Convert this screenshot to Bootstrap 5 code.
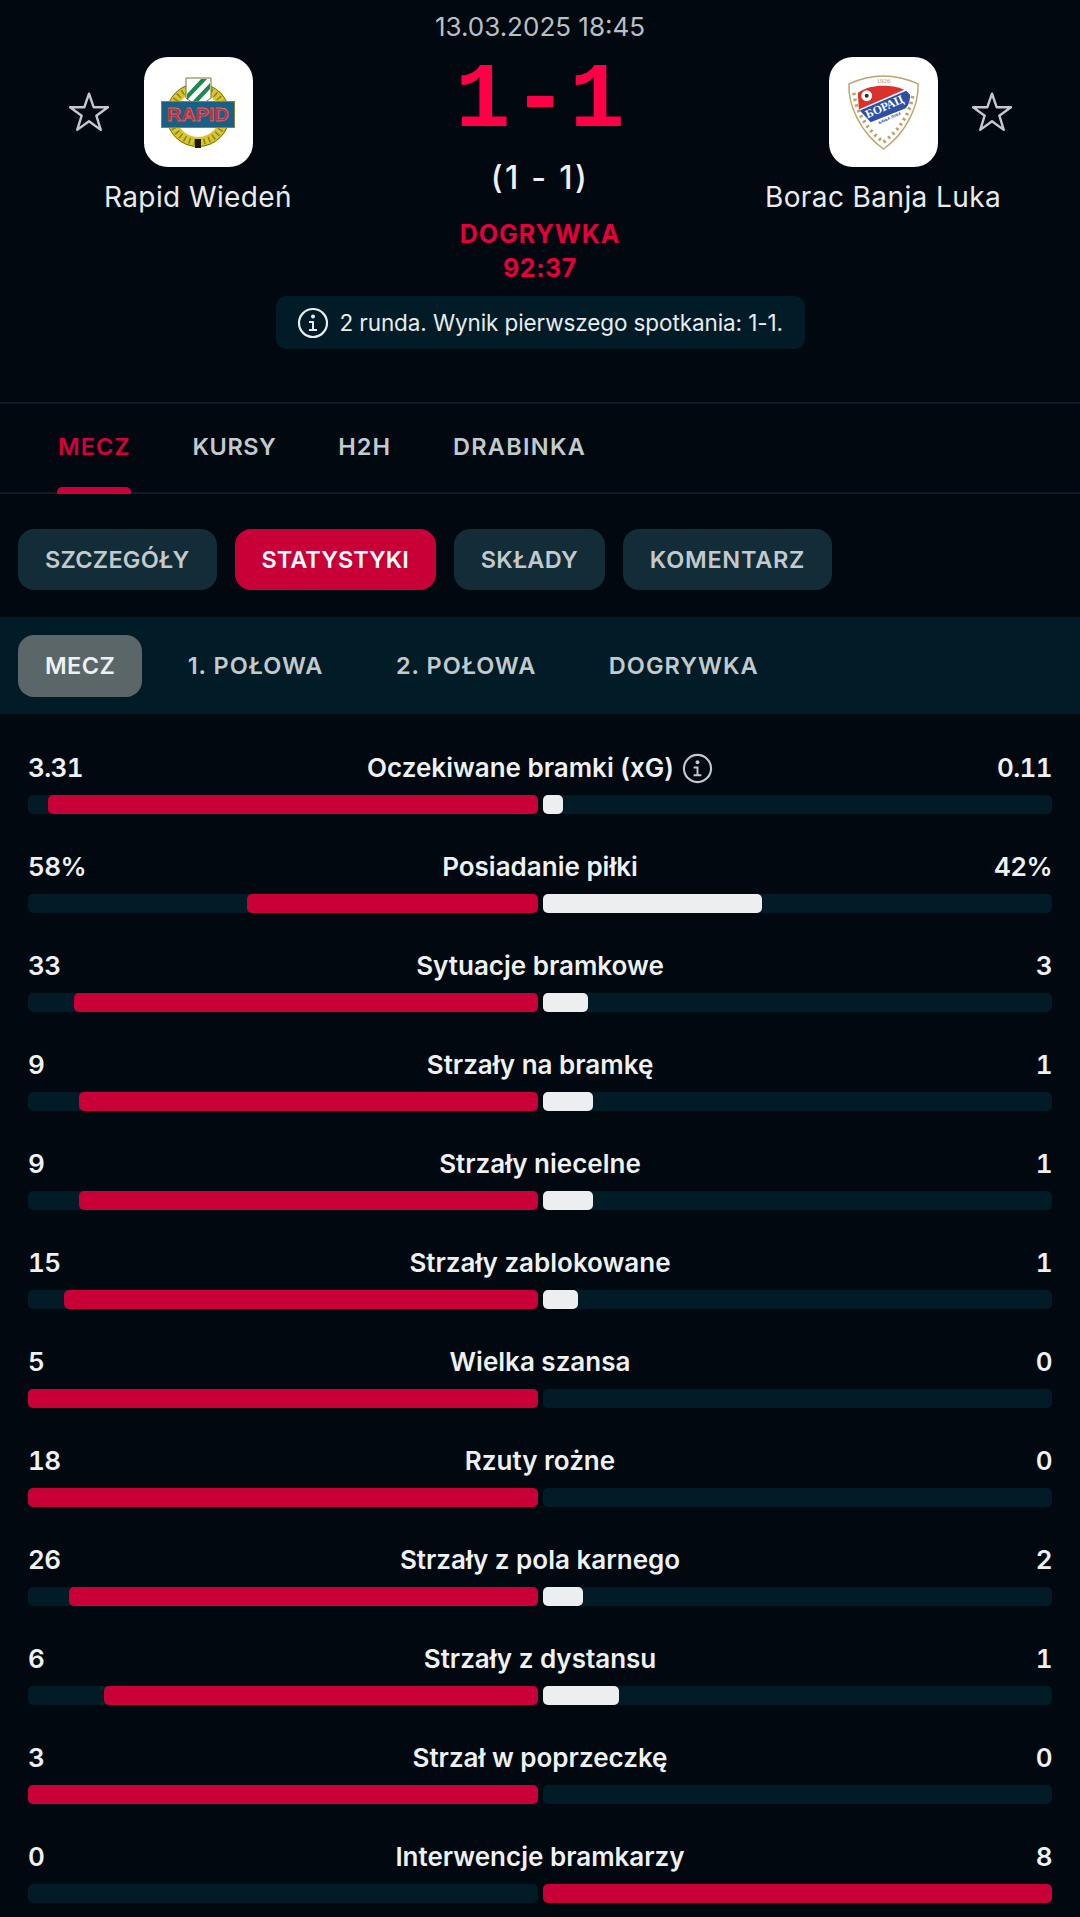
<!DOCTYPE html>
<html lang="pl">
<head>
<meta charset="UTF-8">
<title>Rapid Wiedeń - Borac Banja Luka</title>
<link href="https://cdn.jsdelivr.net/npm/bootstrap@5.3.0/dist/css/bootstrap.min.css" rel="stylesheet">
<style>
html, body { height: 100%; }
body { background: #01080f; color: #e8ecee; font-family: Inter, "Noto Sans", sans-serif; height: 1917px; overflow: hidden; }
.mecz-head { height: 404px; border-bottom: 2px solid #0d1c25; position: relative; }
.data-meczu { text-align: center; color: #b9c0c3; font-size: 26px; line-height: 28px; padding-top: 13px; }
.herb { width: 109px; height: 110px; border-radius: 24px; background: #fff; }
.nazwa { font-size: 28px; line-height: 34px; letter-spacing: .4px; color: #e8ecee; white-space: nowrap; margin-top: 13px; }
.kol-team { position: absolute; top: 57px; width: 300px; }
.gwiazda { position: absolute; top: 91px; }
.wynik { font-family: "Liberation Mono", monospace; font-weight: 700; font-size: 92px; line-height: 84px; color: #ff0046; letter-spacing: 2px; margin-top: 19px; padding-left: 2px; }
.wynik-pol { font-size: 32px; font-weight: 500; line-height: 36px; color: #eef1f2; letter-spacing: 2.3px; margin-top: 16px; }
.status { color: #e4003a; font-size: 25px; font-weight: 700; line-height: 34px; letter-spacing: 1px; }
.status.pierwszy { margin-top: 21px; }
.status.czas { letter-spacing: .6px; }
.info-box { background: #021c27; border-radius: 10px; height: 53px; padding: 0 21px; font-size: 22.5px; letter-spacing: -.1px; color: #e8ecee; width: 529px; margin-top: 11px; white-space: nowrap; }
.info-box svg { margin-right: 11px; }
.zakladki { height: 90px; border-bottom: 2px solid #0d1c25; padding-left: 58px; gap: 62px; }
.zakladka { font-size: 23.5px; font-weight: 600; letter-spacing: 1px; color: #c3cacd; position: relative; line-height: 86px; }
.zakladka.wybrana { color: #d6003c; }
.zakladka.wybrana::after { content: ""; position: absolute; left: -1px; right: 0; bottom: -2px; height: 7px; background: #c80037; border-radius: 5px 5px 0 0; }
.zakladka.kursy { letter-spacing: .5px; }
.zakladka.drabinka { letter-spacing: 1.3px; }
.pigulki { padding: 35px 18px 27px; gap: 18px; }
.pigulka { height: 61px; border-radius: 16px; background: #122c38; color: #c3cacd; font-size: 23.5px; font-weight: 600; letter-spacing: .23px; padding: 0 27px; }
.pigulka.wybrana { background: #c80037; color: #fff; letter-spacing: 0; }
.pigulka.sklady { letter-spacing: .2px; }
.pigulka.komentarz { letter-spacing: .73px; }
.okresy { background: #021c27; height: 97px; padding: 0 18px; }
.okres { font-size: 23.5px; font-weight: 600; letter-spacing: 1px; color: #c3cacd; height: 62px; padding: 0 27px; border-radius: 16px; margin-right: 18.5px; }
.okres.wybrany { background: #5b6669; color: #eef1f2; letter-spacing: .4px; }
.statystyki { padding: 0 28px; margin-top: 36px; }
.wiersz { height: 99px; }
.wiersz-top { display: grid; grid-template-columns: 1fr auto 1fr; align-items: center; font-size: 26px; font-weight: 600; line-height: 36px; color: #eef1f2; height: 36px; }
.liczba { font-variant-numeric: tabular-nums; letter-spacing: -.6px; }
.paski { gap: 5px; margin-top: 9px; }
.tor { flex: 1 1 0; height: 19px; background: #021c27; border-radius: 5px; display: flex; }
.tor.lewy { justify-content: flex-end; }
.wypelnienie { height: 100%; border-radius: 5px; }
.lewy .wypelnienie { background: #c80037; }
.prawy .wypelnienie { background: #eceef0; }
.prawy .wypelnienie.czerwony { background: #c80037; }
</style>
</head>
<body>

<div class="mecz-head">
    <div class="data-meczu">13.03.2025 18:45</div>

    <div class="kol-team d-flex flex-column align-items-center" style="left: 48px">
        <div class="herb d-flex align-items-center justify-content-center">
            <svg width="74" height="71" viewBox="0 0 74 71">
                <circle cx="37" cy="38" r="27" fill="none" stroke="#d9c62e" stroke-width="10"/>
                <circle cx="37" cy="38" r="31.500" fill="none" stroke="#77721a" stroke-width="1"/>
                <circle cx="37" cy="38" r="27" fill="none" stroke="#8a8420" stroke-width="6" stroke-dasharray="1.500 3.500"/>
                <path d="M25 1h25v20l-12.500 9L25 21z" fill="#fff" stroke="#6d7a3a"/>
                <path d="M26 17 40 2h6L26 23zM30 26 49 6v6L34 28z" fill="#1c8a4e"/>
                <rect x=".5" y="24.500" width="73" height="26" fill="#1b5f85" stroke="#85853a"/>
                <text x="37" y="44" text-anchor="middle" font-family="Liberation Sans, sans-serif" font-weight="700" font-size="18.500" textLength="62" lengthAdjust="spacingAndGlyphs" fill="#d8242a" stroke="#e9a9a0" stroke-width=".3">RAPID</text>
                <rect x="34" y="62" width="6" height="9" fill="#1a1a14"/>
            </svg>
        </div>
        <div class="nazwa">Rapid Wiedeń</div>
    </div>
    <svg class="gwiazda" style="left: 68px" width="42" height="42" viewBox="0 0 40 40"><path d="M20 2.500 24.500 15.500H38L27 23.500 31.200 37 20 28.800 8.800 37 13 23.500 2 15.500H15.500z" fill="none" stroke="#c3cacd" stroke-width="2.300" stroke-linejoin="round"/></svg>

    <div class="kol-team d-flex flex-column align-items-center" style="left: 733px">
        <div class="herb d-flex align-items-center justify-content-center">
            <svg width="73" height="75" viewBox="0 0 72 76">
                <path d="M36 1C48 1 60 4 71 9 72 30 60 58 36 75 12 58 0 30 1 9 12 4 24 1 36 1z" fill="#fff" stroke="#bfa36a" stroke-width="1.500"/>
                <path d="M10 18C18 13 26 11 35 11S50 12 57 15L11 35z" fill="#d8322b"/>
                <path d="M12 36 59 16l4 4c0 8-3 12-5 14L23 48z" fill="#2c50a5"/>
                <circle cx="19" cy="21" r="5.500" fill="#fff"/><circle cx="19" cy="21" r="2" fill="#2a2a30"/>
                <text x="36" y="8.500" text-anchor="middle" font-family="Liberation Serif, serif" font-size="7" fill="#b5975a">1926</text>
                <text x="37" y="36" text-anchor="middle" transform="rotate(-24 37 32)" font-family="Liberation Serif, serif" font-weight="700" font-size="12" fill="#fff">БОРАЦ</text>
                <text x="42" y="45" text-anchor="middle" transform="rotate(-24 42 43)" font-family="Liberation Sans, sans-serif" font-weight="700" font-size="4" fill="#2c50a5">БАЊА ЛУКА</text>
                <path d="M6 18C8 38 20 56 36 68 52 56 64 38 66 18" fill="none" stroke="#bfa36a" stroke-width="3.500" stroke-dasharray="2.500 3.500"/>
            </svg>
        </div>
        <div class="nazwa">Borac Banja Luka</div>
    </div>
    <svg class="gwiazda" style="left: 971px" width="42" height="42" viewBox="0 0 40 40"><path d="M20 2.500 24.500 15.500H38L27 23.500 31.200 37 20 28.800 8.800 37 13 23.500 2 15.500H15.500z" fill="none" stroke="#c3cacd" stroke-width="2.300" stroke-linejoin="round"/></svg>

    <div class="d-flex flex-column align-items-center">
        <div class="wynik">1-1</div>
        <div class="wynik-pol">(1 - 1)</div>
        <div class="status pierwszy">DOGRYWKA</div>
        <div class="status czas">92:37</div>
        <div class="info-box d-flex align-items-center">
            <svg class="flex-shrink-0" width="32" height="32" viewBox="0 0 32 32"><circle cx="16" cy="16" r="14" fill="none" stroke="#e8ecee" stroke-width="2.200"/><circle cx="16" cy="9.500" r="2" fill="#e8ecee"/><path d="M12 14h5v8h3v2h-8v-2h3v-6h-3z" fill="#e8ecee"/></svg>
            <span>2 runda. Wynik pierwszego spotkania: 1-1.</span>
        </div>
    </div>
</div>

<div class="zakladki d-flex">
    <div class="zakladka wybrana">MECZ</div>
    <div class="zakladka kursy">KURSY</div>
    <div class="zakladka">H2H</div>
    <div class="zakladka drabinka">DRABINKA</div>
</div>

<div class="pigulki d-flex">
    <div class="pigulka d-flex align-items-center">SZCZEGÓŁY</div>
    <div class="pigulka wybrana d-flex align-items-center">STATYSTYKI</div>
    <div class="pigulka sklady d-flex align-items-center">SKŁADY</div>
    <div class="pigulka komentarz d-flex align-items-center">KOMENTARZ</div>
</div>

<div class="okresy d-flex align-items-center">
    <div class="okres wybrany d-flex align-items-center">MECZ</div>
    <div class="okres d-flex align-items-center">1. POŁOWA</div>
    <div class="okres d-flex align-items-center">2. POŁOWA</div>
    <div class="okres d-flex align-items-center">DOGRYWKA</div>
</div>

<div class="statystyki" id="lista"></div>

<script>
    // lewy i prawy pasek w procentach szerokosci toru
    const dane = [
        ['3.31', 'Oczekiwane bramki (xG)', '0.11', 96, 4, true],
        ['58%', 'Posiadanie piłki', '42%', 57, 43],
        ['33', 'Sytuacje bramkowe', '3', 91, 9],
        ['9', 'Strzały na bramkę', '1', 90, 10],
        ['9', 'Strzały niecelne', '1', 90, 10],
        ['15', 'Strzały zablokowane', '1', 93, 7],
        ['5', 'Wielka szansa', '0', 100, 0],
        ['18', 'Rzuty rożne', '0', 100, 0],
        ['26', 'Strzały z pola karnego', '2', 92, 8],
        ['6', 'Strzały z dystansu', '1', 85, 15],
        ['3', 'Strzał w poprzeczkę', '0', 100, 0],
        ['0', 'Interwencje bramkarzy', '8', 0, 100]
    ];
    const ikona = '<svg class="ms-2" width="31" height="31" viewBox="0 0 32 32"><circle cx="16" cy="16" r="14" fill="none" stroke="#c3cacd" stroke-width="2.200"/><circle cx="16" cy="9.500" r="2" fill="#c3cacd"/><path d="M12 14h5v8h3v2h-8v-2h3v-6h-3z" fill="#c3cacd"/></svg>';
    document.getElementById('lista').innerHTML = dane.map(d => `
        <div class="wiersz">
            <div class="wiersz-top">
                <span class="liczba">${d[0]}</span>
                <span class="d-flex align-items-center">${d[1]}${d[5] ? ikona : ''}</span>
                <span class="liczba text-end">${d[2]}</span>
            </div>
            <div class="paski d-flex">
                <div class="tor lewy"><div class="wypelnienie" style="width:${d[3]}%"></div></div>
                <div class="tor prawy"><div class="wypelnienie ${d[4] === 100 ? 'czerwony' : ''}" style="width:${d[4]}%"></div></div>
            </div>
        </div>`).join('');
</script>
<script src="https://cdn.jsdelivr.net/npm/bootstrap@5.3.0/dist/js/bootstrap.bundle.min.js"></script>
</body>
</html>
